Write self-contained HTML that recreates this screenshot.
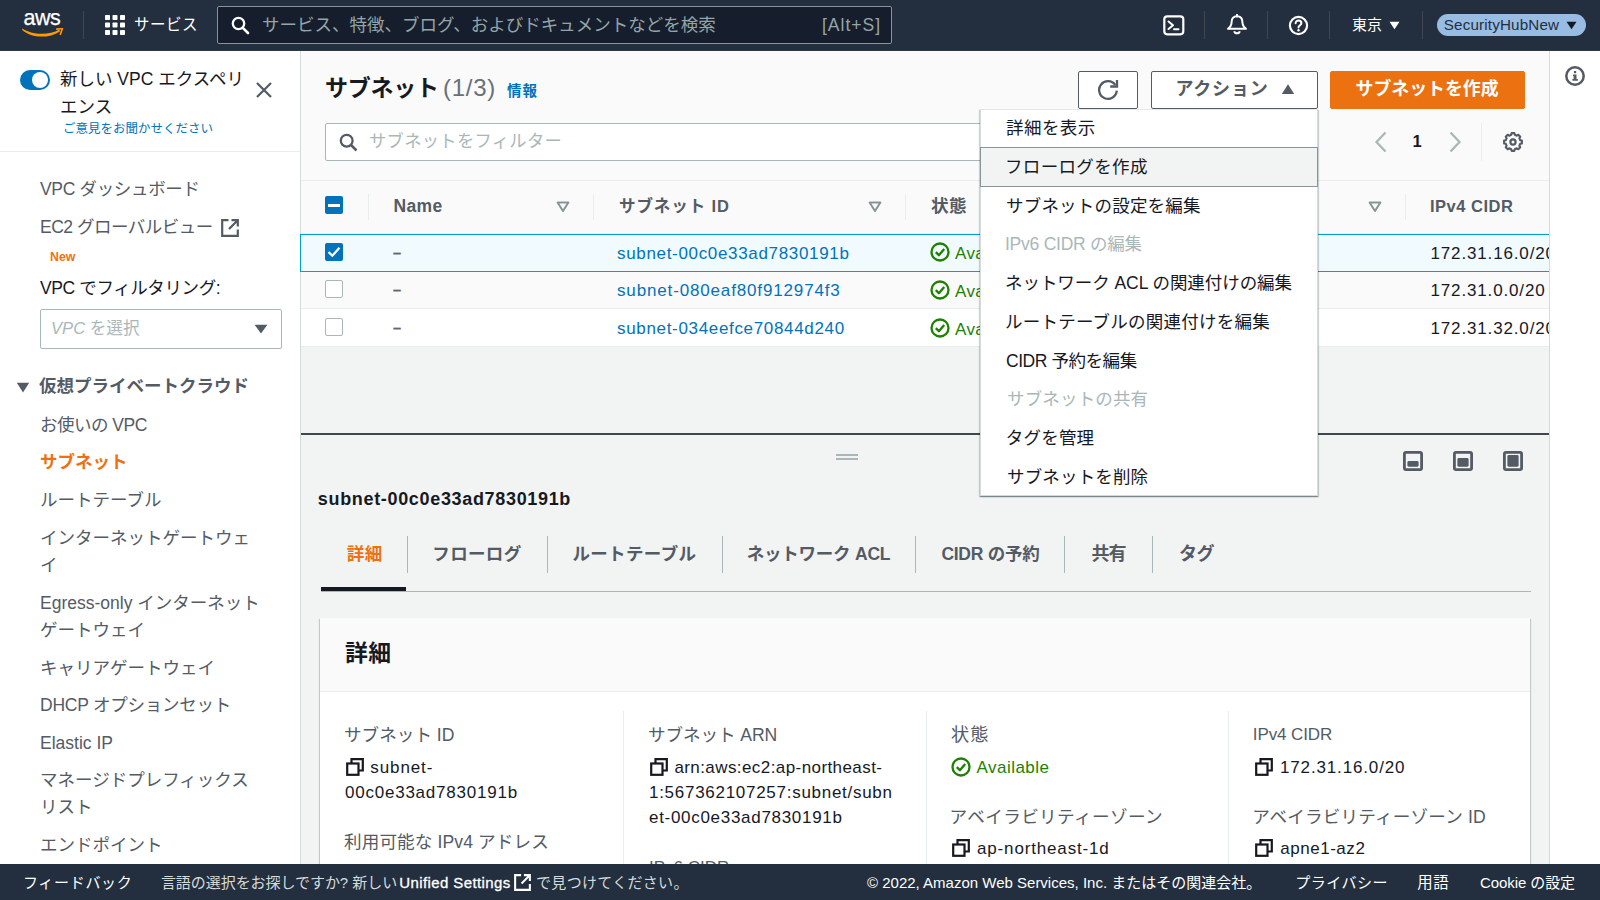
<!DOCTYPE html>
<html lang="ja">
<head>
<meta charset="utf-8">
<title>サブネット | VPC Management Console</title>
<style>
*{box-sizing:border-box;margin:0;padding:0}
html,body{width:1600px;height:900px;overflow:hidden;background:#f2f3f3}
body{font-family:"Liberation Sans","Noto Sans CJK JP",sans-serif;color:#16191f;font-size:16px;position:relative}
.a{position:absolute}
.t{position:absolute;white-space:nowrap;line-height:24px;height:24px}
.b{font-weight:bold}
svg{display:block}
/* top nav */
#nav{left:0;top:0;width:1600px;height:51px;background:#232f3e;border-bottom:1px solid #2d3947}
#nav .sep{position:absolute;top:11px;width:1px;height:28px;background:#414750}
#search{left:217px;top:6px;width:675px;height:38px;background:#161e2d;border:1px solid #879596;border-radius:2px}
/* sidebar */
#side{left:0;top:51px;width:301px;height:813px;background:#fff;border-right:1px solid #d5dbdb}
#side .n{position:absolute;left:40px;white-space:nowrap;font-size:17.5px;line-height:27px;color:#545b64}

/* content */
#c{left:0;top:0;width:1600px;height:900px}
.btn{position:absolute;top:71px;height:38px;border:1px solid #545b64;border-radius:2px;background:#fff}
.hd{position:absolute;top:194px;font-size:16.5px;font-weight:bold;color:#545b64;white-space:nowrap;line-height:24px}
.vd{position:absolute;top:194px;width:1px;height:26px;background:#eaeded}
.row{position:absolute;left:301px;width:1248px;border-bottom:1px solid #eaeded}
.cell{position:absolute;font-size:17px;white-space:nowrap;line-height:24px}
.lnk{color:#0073bb}
.cb{position:absolute;left:325px;width:18px;height:18px;border-radius:2px}
.tab{position:absolute;top:542px;font-size:17.5px;font-weight:bold;color:#545b64;white-space:nowrap;line-height:24px}
.td{position:absolute;top:536px;width:1px;height:37px;background:#aab7b8}
.lab{position:absolute;font-size:17px;color:#545b64;white-space:nowrap;line-height:24px}
.val{position:absolute;font-size:17px;color:#16191f;line-height:25px}
.cd{position:absolute;top:711px;width:1px;height:160px;background:#eaeded}
.mi{position:absolute;left:26px;font-size:17.5px;color:#16191f;white-space:nowrap;line-height:24px}
.mi.dis{color:#aab7b8}
/* footer */
#foot{left:0;top:864px;width:1600px;height:36px;background:#232f3e}
#foot .t{top:8px;font-size:15px;color:#fff;line-height:22px;height:22px}
/* right tools */
#tools{left:1549px;top:51px;width:51px;height:813px;background:#fff;border-left:1px solid #d5dbdb}
</style>
</head>
<body>
<div id="main" class="a" style="left:301px;top:51px;width:1248px;height:813px;background:#f2f3f3"></div>
<div id="c" class="a">
<div class="a" style="left:301px;top:51px;width:1248px;height:183px;background:#fafafa;border-bottom:1px solid #eaeded"></div>
<div class="a" style="left:301px;top:180px;width:1248px;height:1px;background:#eaeded"></div>
<div class="t b" id="ttl" style="left:325px;top:71px;font-size:23px;line-height:34px;height:34px;color:#16191f;letter-spacing:-0.25px">サブネット</div>
<div class="t" id="cnt" style="left:443px;top:71px;font-size:24px;line-height:34px;height:34px;color:#687078;letter-spacing:0.75px">(1/3)</div>
<div class="t b" id="info" style="left:507.0px;top:79px;font-size:14.5px;color:#0073bb;letter-spacing:1.0px">情報</div>
<div class="btn" style="left:1078px;width:60px"></div>
<svg class="a" style="left:1097px;top:79px" width="22" height="22" viewBox="0 0 22 22"><path d="M18.3 6 A8.85 8.85 0 1 0 19.8 11.7" fill="none" stroke="#545b64" stroke-width="2.3"/><path d="M20 1 V7.5 H13.2" fill="none" stroke="#545b64" stroke-width="2.3" stroke-linejoin="miter"/></svg>
<div class="btn" style="left:1151px;width:167px"></div>
<div class="t b" id="act" style="left:1175.5px;top:77px;font-size:18px;color:#545b64;letter-spacing:0.76px">アクション</div>
<svg class="a" style="left:1281px;top:83px" width="14" height="12" viewBox="0 0 14 12"><path d="M0.8 11 H13.2 L7 1.2 Z" fill="#545b64"/></svg>
<div class="btn" style="left:1330px;width:195px;background:#ec7211;border-color:#ec7211"></div>
<div class="t b" id="mk" style="left:1355.5px;top:77px;font-size:17.9px;color:#fff;letter-spacing:-0.0px">サブネットを作成</div>
<div class="a" style="left:325px;top:123px;width:700px;height:38px;background:#fff;border:1px solid #aab7b8;border-radius:2px"></div>
<svg class="a" style="left:339px;top:133px" width="19" height="19" viewBox="0 0 19 19"><circle cx="7.7" cy="7.7" r="5.9" fill="none" stroke="#545b64" stroke-width="2.3"/><path d="M12 12 L17.5 17.5" stroke="#545b64" stroke-width="2.5" stroke-linecap="butt"/></svg>
<div class="t" id="fph" style="left:369px;top:129px;font-size:17.3px;color:#aab7b8;letter-spacing:0.3px">サブネットをフィルター</div>
<svg class="a" style="left:1374px;top:131px" width="14" height="22" viewBox="0 0 14 22"><path d="M11.5 1.5 L2.5 11 L11.5 20.5" fill="none" stroke="#aab7b8" stroke-width="2.3"/></svg>
<div class="t b" style="left:1412.5px;top:129px;font-size:16.5px;color:#16191f">1</div>
<svg class="a" style="left:1448px;top:131px" width="14" height="22" viewBox="0 0 14 22"><path d="M2.5 1.5 L11.5 11 L2.5 20.5" fill="none" stroke="#aab7b8" stroke-width="2.3"/></svg>
<div class="a" style="left:1481px;top:123px;width:1px;height:38px;background:#eaeded"></div>
<svg class="a" id="gear" style="left:1502px;top:131px" width="22" height="22" viewBox="0 0 22 22"><path d="M9.21 3.82 L9.59 2.11 L12.41 2.11 L12.79 3.82 L14.81 4.66 L16.29 3.72 L18.28 5.71 L17.34 7.19 L18.18 9.21 L19.89 9.59 L19.89 12.41 L18.18 12.79 L17.34 14.81 L18.28 16.29 L16.29 18.28 L14.81 17.34 L12.79 18.18 L12.41 19.89 L9.59 19.89 L9.21 18.18 L7.19 17.34 L5.71 18.28 L3.72 16.29 L4.66 14.81 L3.82 12.79 L2.11 12.41 L2.11 9.59 L3.82 9.21 L4.66 7.19 L3.72 5.71 L5.71 3.72 L7.19 4.66 Z" fill="none" stroke="#545b64" stroke-width="2.1" stroke-linejoin="round"/><circle cx="11" cy="11" r="2.6" fill="none" stroke="#545b64" stroke-width="2.2"/></svg>
<!-- column headers -->
<div class="cb" style="top:196px;background:#0073bb"></div><div class="a" style="left:328px;top:203.5px;width:12px;height:3px;background:#fff"></div>
<div class="vd" style="left:368px"></div>
<div class="hd" id="hname" style="left:393.5px;letter-spacing:0.33px;font-size:17.5px">Name</div><svg class="a" style="left:556px;top:201px" width="14" height="12" viewBox="0 0 14 12"><path d="M1.6 1.5 H12.4 L7 10 Z" fill="none" stroke="#879596" stroke-width="2" stroke-linejoin="round"/></svg>
<div class="vd" style="left:593px"></div>
<div class="hd" id="hsid" style="left:619px;letter-spacing:0.92px">サブネット ID</div><svg class="a" style="left:868px;top:201px" width="14" height="12" viewBox="0 0 14 12"><path d="M1.6 1.5 H12.4 L7 10 Z" fill="none" stroke="#879596" stroke-width="2" stroke-linejoin="round"/></svg>
<div class="vd" style="left:905px"></div>
<div class="hd" id="hst" style="left:931.0px;letter-spacing:0.5px;font-size:17.6px">状態</div><svg class="a" style="left:1368px;top:201px" width="14" height="12" viewBox="0 0 14 12"><path d="M1.6 1.5 H12.4 L7 10 Z" fill="none" stroke="#879596" stroke-width="2" stroke-linejoin="round"/></svg>
<div class="vd" style="left:1405px"></div>
<div class="hd" id="hcidr" style="left:1430.0px;letter-spacing:0.5px">IPv4 CIDR</div>
<!-- rows -->
<div class="row" style="top:271px;height:38px;background:#fafafa"></div>
<div class="row" style="top:309px;height:38px;background:#fff"></div>
<div class="row" style="top:234px;height:38px;width:1270px;background:#f1faff;border:1px solid #00a1c9;border-left:0"></div>
<div class="cb" style="top:243px;background:#0073bb"></div><svg class="a" style="left:325px;top:243px" width="18" height="18" viewBox="0 0 18 18"><path d="M3.5 9 L7.3 12.7 L14.5 4.8" fill="none" stroke="#fff" stroke-width="2.3" stroke-linejoin="miter"/></svg>
<div class="cb" style="top:280px;background:#fff;border:1px solid #aab7b8"></div>
<div class="cb" style="top:318px;background:#fff;border:1px solid #aab7b8"></div>
<div class="cell b" id="d1" style="left:393px;top:241.0px;font-size:14.5px;color:#5f6872;-webkit-text-stroke:0.3px #5f6872">–</div><div class="cell b" id="d2" style="left:393px;top:278.0px;font-size:14.5px;color:#5f6872;-webkit-text-stroke:0.3px #5f6872">–</div><div class="cell b" id="d3" style="left:393px;top:316.0px;font-size:14.5px;color:#5f6872;-webkit-text-stroke:0.3px #5f6872">–</div>
<div class="cell lnk" id="l1" style="left:617.0px;top:241.5px;letter-spacing:0.67px">subnet-00c0e33ad7830191b</div>
<div class="cell lnk" id="l2" style="left:617.0px;top:278.5px;letter-spacing:0.85px">subnet-080eaf80f912974f3</div>
<div class="cell lnk" id="l3" style="left:617.0px;top:316.5px;letter-spacing:0.67px">subnet-034eefce70844d240</div>
<svg class="a" style="left:929.6px;top:242.0px" width="20" height="20" viewBox="0 0 20 20"><circle cx="10" cy="10" r="8.5" fill="none" stroke="#1d8102" stroke-width="2.3"/><path d="M5.8 10.2 L8.9 13.2 L14.2 7" fill="none" stroke="#1d8102" stroke-width="2.3" stroke-linejoin="round" stroke-linecap="butt"/></svg><div class="cell" style="left:955px;top:242.0px;color:#1d8102;letter-spacing:0.4px">Available</div><svg class="a" style="left:929.6px;top:280.0px" width="20" height="20" viewBox="0 0 20 20"><circle cx="10" cy="10" r="8.5" fill="none" stroke="#1d8102" stroke-width="2.3"/><path d="M5.8 10.2 L8.9 13.2 L14.2 7" fill="none" stroke="#1d8102" stroke-width="2.3" stroke-linejoin="round" stroke-linecap="butt"/></svg><div class="cell" style="left:955px;top:280.0px;color:#1d8102;letter-spacing:0.4px">Available</div><svg class="a" style="left:929.6px;top:318.0px" width="20" height="20" viewBox="0 0 20 20"><circle cx="10" cy="10" r="8.5" fill="none" stroke="#1d8102" stroke-width="2.3"/><path d="M5.8 10.2 L8.9 13.2 L14.2 7" fill="none" stroke="#1d8102" stroke-width="2.3" stroke-linejoin="round" stroke-linecap="butt"/></svg><div class="cell" style="left:955px;top:318.0px;color:#1d8102;letter-spacing:0.4px">Available</div>
<div class="a" style="left:1431px;top:234px;width:118px;height:113px;overflow:hidden">
<div class="cell" id="ip1" style="left:-0.5px;top:7.5px;letter-spacing:0.85px">172.31.16.0/20</div>
<div class="cell" id="ip2" style="left:-0.5px;top:44.5px;letter-spacing:0.85px">172.31.0.0/20</div>
<div class="cell" id="ip3" style="left:-0.5px;top:82.5px;letter-spacing:0.85px">172.31.32.0/20</div>
</div>

<div class="a" style="left:301px;top:433px;width:1248px;height:2px;background:#414750"></div>
<div class="a" style="left:836px;top:454px;width:22px;height:1.5px;background:#aab7b8"></div>
<div class="a" style="left:836px;top:458px;width:22px;height:1.5px;background:#aab7b8"></div>
<svg class="a" style="left:1403px;top:451px" width="20" height="20" viewBox="0 0 20 20"><rect x="1.4" y="1.4" width="17.2" height="17.2" rx="1.6" fill="none" stroke="#545b64" stroke-width="2.8"/><rect x="4.4" y="10.1" width="11.2" height="5.6" rx="1.4" fill="#545b64"/></svg><svg class="a" style="left:1453px;top:451px" width="20" height="20" viewBox="0 0 20 20"><rect x="1.4" y="1.4" width="17.2" height="17.2" rx="1.6" fill="none" stroke="#545b64" stroke-width="2.8"/><rect x="4.4" y="7.0" width="11.2" height="8.7" rx="1.4" fill="#545b64"/></svg><svg class="a" style="left:1503px;top:451px" width="20" height="20" viewBox="0 0 20 20"><rect x="1.4" y="1.4" width="17.2" height="17.2" rx="1.6" fill="none" stroke="#545b64" stroke-width="2.8"/><rect x="4.4" y="4.0" width="11.2" height="11.7" rx="1.4" fill="#545b64"/></svg>
<div class="t b" id="sid" style="left:317.8px;top:487.0px;font-size:18px;color:#16191f;letter-spacing:0.67px">subnet-00c0e33ad7830191b</div>
<div class="tab" id="tb1" style="left:346.8px;color:#ec7211;letter-spacing:0.4px">詳細</div>
<div class="td" style="left:407px"></div>
<div class="tab" id="tb2" style="left:432.3px;letter-spacing:0.34px">フローログ</div>
<div class="td" style="left:547px"></div>
<div class="tab" id="tb3" style="left:572.4px;letter-spacing:0.36px">ルートテーブル</div>
<div class="td" style="left:722px"></div>
<div class="tab" id="tb4" style="left:746.8px;letter-spacing:-0.24px">ネットワーク ACL</div>
<div class="td" style="left:915px"></div>
<div class="tab" id="tb5" style="left:941.4px;letter-spacing:-0.26px">CIDR の予約</div>
<div class="td" style="left:1064px"></div>
<div class="tab" id="tb6" style="left:1091.5px;letter-spacing:-1.0px;font-size:18px">共有</div>
<div class="td" style="left:1152px"></div>
<div class="tab" id="tb7" style="left:1179px;letter-spacing:-0.6px;font-size:18px">タグ</div>
<div class="a" style="left:321px;top:591px;width:1210px;height:1px;background:#aab7b8"></div>
<div class="a" style="left:321px;top:587px;width:85px;height:4px;background:#16191f"></div>
<div class="a" style="left:320px;top:618px;width:1210px;height:260px;background:#fff;box-shadow:0 1px 1px 0 rgba(0,28,36,.3),1px 1px 1px 0 rgba(0,28,36,.15),-1px 1px 1px 0 rgba(0,28,36,.15)"></div>
<div class="a" style="left:320px;top:618px;width:1210px;height:74px;background:#fafafa;border-bottom:1px solid #eaeded"></div>
<div class="t b" id="dt" style="left:345px;top:639px;font-size:22.8px;line-height:28px;height:28px;color:#16191f;letter-spacing:0.4px">詳細</div>
<div class="cd" style="left:623px"></div><div class="cd" style="left:926px"></div><div class="cd" style="left:1228px"></div>
<div class="lab" id="la1" style="left:344.0px;top:723.0px;letter-spacing:0.0px;font-size:17.6px">サブネット ID</div>
<svg class="a" style="left:346px;top:758px" width="18" height="18" viewBox="0 0 18 18"><path d="M5.5 5.5 V1.2 H16.8 V12.5 H12.5" fill="none" stroke="#16191f" stroke-width="2.2"/><rect x="1.2" y="5.5" width="11.3" height="11.3" fill="none" stroke="#16191f" stroke-width="2.2"/></svg>
<div class="val" id="va1" style="left:345px;top:755.0px;white-space:nowrap"><span id="va1a" style="margin-left:25.3px;letter-spacing:0.9px">subnet-</span><br><span id="va1b" style="letter-spacing:0.77px">00c0e33ad7830191b</span></div>
<div class="lab" id="la2" style="left:344.0px;top:830.0px;letter-spacing:0.1px;font-size:17.6px">利用可能な IPv4 アドレス</div>
<div class="lab" id="la3" style="left:648.0px;top:723.0px;letter-spacing:-0.09px;font-size:17.6px">サブネット ARN</div>
<svg class="a" style="left:650px;top:758px" width="18" height="18" viewBox="0 0 18 18"><path d="M5.5 5.5 V1.2 H16.8 V12.5 H12.5" fill="none" stroke="#16191f" stroke-width="2.2"/><rect x="1.2" y="5.5" width="11.3" height="11.3" fill="none" stroke="#16191f" stroke-width="2.2"/></svg>
<div class="val" id="va3" style="left:649px;top:755.0px;width:260px;white-space:nowrap"><span id="va3a" style="margin-left:25.4px;letter-spacing:0.42px">arn:aws:ec2:ap-northeast-</span><br><span id="va3b" style="letter-spacing:0.72px">1:567362107257:subnet/subn</span><br><span id="va3c" style="letter-spacing:0.7px">et-00c0e33ad7830191b</span></div>
<div class="lab" id="la4" style="left:649px;top:856.0px;color:#545b64">IPv6 CIDR</div>
<div class="lab" id="la5" style="left:951px;top:723.0px;letter-spacing:1.0px;font-size:18.2px">状態</div>
<svg class="a" style="left:950.6px;top:757.2px" width="20" height="20" viewBox="0 0 20 20"><circle cx="10" cy="10" r="8.5" fill="none" stroke="#1d8102" stroke-width="2.3"/><path d="M5.8 10.2 L8.9 13.2 L14.2 7" fill="none" stroke="#1d8102" stroke-width="2.3" stroke-linejoin="round"/></svg>
<div class="val" id="va5" style="left:976.6px;top:755.0px;color:#1d8102;letter-spacing:0.45px">Available</div>
<div class="lab" id="la6" style="left:949.6px;top:805.0px;letter-spacing:0.38px;font-size:17.6px">アベイラビリティーゾーン</div>
<svg class="a" style="left:952px;top:839px" width="18" height="18" viewBox="0 0 18 18"><path d="M5.5 5.5 V1.2 H16.8 V12.5 H12.5" fill="none" stroke="#16191f" stroke-width="2.2"/><rect x="1.2" y="5.5" width="11.3" height="11.3" fill="none" stroke="#16191f" stroke-width="2.2"/></svg>
<div class="val" id="va6" style="left:977px;top:836.0px;letter-spacing:0.84px">ap-northeast-1d</div>
<div class="lab" id="la7" style="left:1252.8px;top:723.0px;letter-spacing:-0.1px">IPv4 CIDR</div>
<svg class="a" style="left:1255px;top:758px" width="18" height="18" viewBox="0 0 18 18"><path d="M5.5 5.5 V1.2 H16.8 V12.5 H12.5" fill="none" stroke="#16191f" stroke-width="2.2"/><rect x="1.2" y="5.5" width="11.3" height="11.3" fill="none" stroke="#16191f" stroke-width="2.2"/></svg>
<div class="val" id="va7" style="left:1280.0px;top:755.0px;letter-spacing:0.85px">172.31.16.0/20</div>
<div class="lab" id="la8" style="left:1252.2px;top:805.0px;letter-spacing:0.16px;font-size:17.6px">アベイラビリティーゾーン ID</div>
<svg class="a" style="left:1255px;top:839px" width="18" height="18" viewBox="0 0 18 18"><path d="M5.5 5.5 V1.2 H16.8 V12.5 H12.5" fill="none" stroke="#16191f" stroke-width="2.2"/><rect x="1.2" y="5.5" width="11.3" height="11.3" fill="none" stroke="#16191f" stroke-width="2.2"/></svg>
<div class="val" id="va8" style="left:1280.2px;top:836.0px;letter-spacing:0.54px">apne1-az2</div>

<div class="a" id="dd" style="left:980px;top:109px;width:338px;height:387px;background:#fff;border:1px solid #d5dbdb;border-top:1px solid #e4e8e8;box-shadow:0 1px 1px 0 rgba(0,28,36,.3),1px 1px 1px 0 rgba(0,28,36,.15),-1px 1px 1px 0 rgba(0,28,36,.15)">
<div class="a" style="left:-1px;top:37px;width:338px;height:40px;background:#f2f3f3;border:1px solid #879596"></div>
<div class="mi" id="m1" style="left:25.0px;top:6px;letter-spacing:0.45px">詳細を表示</div>
<div class="mi" id="m2" style="left:24.0px;top:45px;letter-spacing:0.34px">フローログを作成</div>
<div class="mi" id="m3" style="left:25.0px;top:84px;letter-spacing:0.2px">サブネットの設定を編集</div>
<div class="mi dis" id="m4" style="left:24.0px;top:122px;letter-spacing:-0.25px">IPv6 CIDR の編集</div>
<div class="mi" id="m5" style="left:24.0px;top:161px;letter-spacing:-0.06px">ネットワーク ACL の関連付けの編集</div>
<div class="mi" id="m6" style="left:24.0px;top:200px;letter-spacing:0.23px">ルートテーブルの関連付けを編集</div>
<div class="mi" id="m7" style="left:25.0px;top:239px;letter-spacing:-0.44px">CIDR 予約を編集</div>
<div class="mi dis" id="m8" style="left:26px;top:277px;letter-spacing:0.16px">サブネットの共有</div>
<div class="mi" id="m9" style="left:24.8px;top:316px;letter-spacing:0.2px">タグを管理</div>
<div class="mi" id="m10" style="left:26px;top:355px;letter-spacing:0.16px">サブネットを削除</div>
</div>
</div>
<div id="side" class="a">
<div class="a" style="left:20px;top:19px;width:30px;height:20px;border-radius:10px;background:#0073bb"></div>
<div class="a" style="left:32px;top:21px;width:16px;height:16px;border-radius:8px;background:#fff"></div>
<div class="a" id="nvx" style="left:60px;top:14px;width:190px;font-size:17.5px;line-height:28px;color:#16191f">新しい VPC エクスペリエンス</div>
<div class="t" id="fbk" style="left:63px;top:66px;font-size:12.5px;color:#0073bb">ご意見をお聞かせください</div>
<svg class="a" style="left:255px;top:30px" width="18" height="18" viewBox="0 0 18 18"><path d="M2 2 L16 16 M16 2 L2 16" stroke="#545b64" stroke-width="2.2" stroke-linecap="butt"/></svg>
<div class="a" style="left:0;top:100px;width:300px;height:1px;background:#eaeded"></div>
<div class="n" style="letter-spacing:-0.33px;top:125px">VPC ダッシュボード</div>
<div class="n" style="letter-spacing:-0.5px;top:163px">EC2 グローバルビュー</div>
<svg class="a" style="left:221px;top:168px" width="18" height="18" viewBox="0 0 18 18"><path d="M7.5 1.2 H1.2 V16.8 H16.8 V10.5" fill="none" stroke="#545b64" stroke-width="2.2" stroke-linejoin="miter"/><path d="M10.5 1.2 H16.8 V7.5 M16.8 1.2 L8 10" fill="none" stroke="#545b64" stroke-width="2.2"/></svg>
<div class="t b" style="left:50px;top:194px;font-size:12.3px;color:#ec7211">New</div>
<div class="n" style="letter-spacing:-0.39px;top:224px;color:#16191f">VPC でフィルタリング:</div>
<div class="a" style="left:40px;top:258px;width:242px;height:40px;border:1px solid #aab7b8;border-radius:2px;background:#fff"></div>
<div class="t" style="left:51px;top:265.5px;font-size:16.6px;color:#aab7b8"><i>VPC</i> を選択</div>
<svg class="a" style="left:254px;top:273px" width="14" height="10" viewBox="0 0 14 10"><path d="M0.6 0.8 H13.4 L7 9.4 Z" fill="#545b64"/></svg>
<svg class="a" style="left:16px;top:331px" width="14" height="11" viewBox="0 0 14 11"><path d="M0.8 0.8 H13.2 L7 10.4 Z" fill="#545b64"/></svg>
<div class="n b" style="left:39px;top:322px">仮想プライベートクラウド</div>
<div class="n" style="letter-spacing:-0.5px;top:361px">お使いの VPC</div>
<div class="n b" style="top:398px;color:#ec7211">サブネット</div>
<div class="n" style="top:436px">ルートテーブル</div>
<div class="n" style="top:474px;white-space:normal;width:225px">インターネットゲートウェイ</div>
<div class="n" style="top:539px;white-space:normal;width:235px">Egress-only インターネットゲートウェイ</div>
<div class="n" style="top:604px">キャリアゲートウェイ</div>
<div class="n" style="letter-spacing:-0.25px;top:641px">DHCP オプションセット</div>
<div class="n" style="top:679px">Elastic IP</div>
<div class="n" style="top:716px;white-space:normal;width:225px">マネージドプレフィックスリスト</div>
<div class="n" style="top:781px">エンドポイント</div>
</div>
<div class="a" style="left:300px;top:234px;width:1px;height:38px;background:#00a1c9"></div>
<div id="tools" class="a"><svg class="a" style="left:15px;top:15px" width="20" height="20" viewBox="0 0 20 20"><circle cx="10" cy="10" r="8.7" fill="none" stroke="#545b64" stroke-width="2.5"/><rect x="8.9" y="5" width="2.3" height="2.2" fill="#545b64"/><path d="M8 8.5 H11.5 V13 H12.8 V14.7 H7.4 V13 H8.6 V10.1 H8 Z" fill="#545b64"/></svg></div>
<div id="nav" class="a">
<div class="t" id="aws" style="left:23.5px;top:5.5px;font-size:21.5px;color:#fff;letter-spacing:-0.5px;line-height:24px;-webkit-text-stroke:0.25px #fff">aws</div>
<svg class="a" style="left:21.5px;top:28px" width="42" height="11" viewBox="0 0 42 11"><path d="M0.4 0.6 C9 6.6 26 8.2 37.4 1.6 L38 3.4 C26 11.2 9 9.8 0.2 2 Z" fill="#f90"/><path d="M34.8 1.1 L40.4 0.5 L38.4 6.3" fill="none" stroke="#f90" stroke-width="1.6" stroke-linejoin="round" stroke-linecap="round"/></svg>
<div class="sep" style="left:83px"></div>
<svg class="a" style="left:105px;top:15px" width="20" height="20" viewBox="0 0 20 20" fill="#fff"><rect x="0" y="0" width="5" height="5" rx=".8"/><rect x="7.5" y="0" width="5" height="5" rx=".8"/><rect x="15" y="0" width="5" height="5" rx=".8"/><rect x="0" y="7.5" width="5" height="5" rx=".8"/><rect x="7.5" y="7.5" width="5" height="5" rx=".8"/><rect x="15" y="7.5" width="5" height="5" rx=".8"/><rect x="0" y="15" width="5" height="5" rx=".8"/><rect x="7.5" y="15" width="5" height="5" rx=".8"/><rect x="15" y="15" width="5" height="5" rx=".8"/></svg>
<div class="t" id="svc" style="left:134px;top:13px;font-size:15.5px;color:#fff;letter-spacing:0.47px">サービス</div>
<div id="search" class="a">
<svg class="a" style="left:13px;top:9px" width="19" height="19" viewBox="0 0 19 19"><circle cx="7.5" cy="7.5" r="5.7" fill="none" stroke="#fff" stroke-width="2.3"/><path d="M11.8 11.8 L17 17" stroke="#fff" stroke-width="2.6" stroke-linecap="round"/></svg>
<div class="t" id="sph" style="left:44px;top:6px;font-size:17.5px;color:#95a5a6">サービス、特徴、ブログ、およびドキュメントなどを検索</div>
<div class="t" id="alts" style="left:604.0px;top:6px;font-size:17.5px;color:#95a5a6;letter-spacing:1.0px">[Alt+S]</div>
</div>
<svg class="a" style="left:1163px;top:15px" width="22" height="21" viewBox="0 0 22 21"><rect x="1.3" y="1.3" width="19" height="18" rx="3" fill="none" stroke="#fff" stroke-width="2.2"/><path d="M5.5 6.5 L10 10.3 L5.5 14" fill="none" stroke="#fff" stroke-width="2" stroke-linejoin="round" stroke-linecap="round"/><path d="M11 14.3 H15.5" stroke="#fff" stroke-width="2" stroke-linecap="round"/></svg>
<div class="sep" style="left:1204px"></div>
<svg class="a" style="left:1226px;top:14px" width="22" height="22" viewBox="0 0 22 22"><path d="M11 2.2 C7.2 2.2 5.6 5 5.6 8 C5.6 11.5 4 13.3 2 14.8 H20 C18 13.3 16.4 11.5 16.4 8 C16.4 5 14.8 2.2 11 2.2 Z" fill="none" stroke="#fff" stroke-width="2" stroke-linejoin="round"/><path d="M8.2 17.2 A2.9 2.9 0 0 0 13.8 17.2" fill="none" stroke="#fff" stroke-width="2"/><path d="M11 0.8 V2.5" stroke="#fff" stroke-width="2" stroke-linecap="round"/></svg>
<div class="sep" style="left:1267px"></div>
<svg class="a" style="left:1288px;top:15px" width="21" height="21" viewBox="0 0 21 21"><circle cx="10.5" cy="10.5" r="8.6" fill="none" stroke="#fff" stroke-width="2.2"/><path d="M7.6 8.3 C7.6 4.6 13.4 4.8 13.4 8.2 C13.4 10.2 10.5 10.2 10.5 12.4" fill="none" stroke="#fff" stroke-width="2" stroke-linecap="round"/><circle cx="10.5" cy="15.3" r="1.2" fill="#fff"/></svg>
<div class="sep" style="left:1329px"></div>
<div class="t" id="tokyo" style="left:1352px;top:13px;font-size:15px;color:#fff">東京</div>
<svg class="a" style="left:1389px;top:21px" width="11" height="9" viewBox="0 0 11 9"><path d="M0.5 0.8 H10.5 L5.5 8.3 Z" fill="#fff"/></svg>
<div class="sep" style="left:1422px"></div>
<div class="a" style="left:1437px;top:14px;width:149px;height:22px;border-radius:11px;background:#99bce3"></div>
<div class="t" id="acct" style="left:1443.8px;top:13px;font-size:15.2px;color:#232f3e;letter-spacing:0.16px">SecurityHubNew</div>
<svg class="a" style="left:1566px;top:21px" width="11" height="9" viewBox="0 0 11 9"><path d="M0.5 0.8 H10.5 L5.5 8.3 Z" fill="#16191f"/></svg>
</div>
<div id="foot" class="a">
<div class="t" id="f1" style="left:23.0px;letter-spacing:0.67px">フィードバック</div>
<div class="t" id="f2" style="left:160.9px;color:#d5dbdb;letter-spacing:-0.05px">言語の選択をお探しですか? 新しい</div><div class="t" id="f2b" style="left:399.3px;color:#fff;-webkit-text-stroke:.3px #fff;letter-spacing:0.39px">Unified Settings</div>
<svg class="a" style="left:514px;top:10px" width="17" height="17" viewBox="0 0 18 18"><path d="M7.5 1.2 H1.2 V16.8 H16.8 V10.5" fill="none" stroke="#fff" stroke-width="2.2"/><path d="M10.5 1.2 H16.8 V7.5 M16.8 1.2 L8 10" fill="none" stroke="#fff" stroke-width="2.2"/></svg>
<div class="t" id="f3" style="left:536.0px;color:#d5dbdb;letter-spacing:0.32px">で見つけてください。</div>
<div class="t" id="f4" style="left:867px;letter-spacing:0.0px">© 2022, Amazon Web Services, Inc. またはその関連会社。</div>
<div class="t" id="f5" style="left:1295.2px;letter-spacing:0.5px">プライバシー</div>
<div class="t" id="f6" style="left:1417.2px;letter-spacing:0.6px;font-size:15.4px">用語</div>
<div class="t" id="f7" style="left:1480.0px;letter-spacing:-0.09px">Cookie の設定</div>
</div>
</body>
</html>
